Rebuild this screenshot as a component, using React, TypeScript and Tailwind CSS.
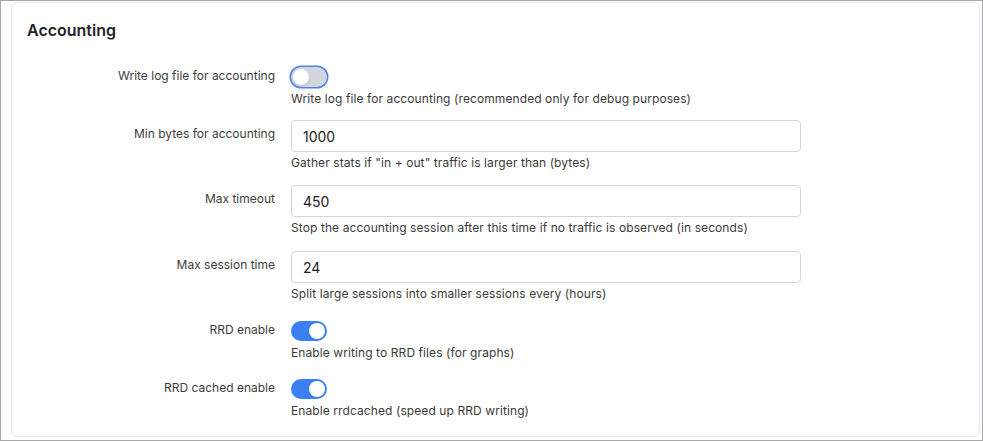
import * as React from 'react'

type Row =
  | { kind: 'toggle'; label: string; help: string; on: boolean; top: string }
  | { kind: 'input'; label: string; help: string; value: string; top: string }

// row spacing in the source form isn't perfectly even, so each row keeps its own top margin
const rows: Row[] = [
  { kind: 'toggle', label: 'Write log file for accounting', help: 'Write log file for accounting (recommended only for debug purposes)', on: false, top: 'mt-0' },
  { kind: 'input', label: 'Min bytes for accounting', help: 'Gather stats if "in + out" traffic is larger than (bytes)', value: '1000', top: 'mt-[11px]' },
  { kind: 'input', label: 'Max timeout', help: 'Stop the accounting session after this time if no traffic is observed (in seconds)', value: '450', top: 'mt-[12px]' },
  { kind: 'input', label: 'Max session time', help: 'Split large sessions into smaller sessions every (hours)', value: '24', top: 'mt-[13px]' },
  { kind: 'toggle', label: 'RRD enable', help: 'Enable writing to RRD files (for graphs)', on: true, top: 'mt-[15px]' },
  { kind: 'toggle', label: 'RRD cached enable', help: 'Enable rrdcached (speed up RRD writing)', on: true, top: 'mt-[14px]' },
]

function Toggle({ on }: { on: boolean }) {
  return (
    <div className="h-[24px] flex items-center">
      <div
        className={
          on
            ? 'relative w-[36px] h-[20px] rounded-full bg-[#3b7ff0]'
            : 'relative w-[36px] h-[20px] rounded-full bg-[#d3d6dc] ring-[1.5px] ring-[#4a86f0]'
        }
      >
        <span
          className={
            on
              ? 'absolute top-[2px] right-[2px] w-[16px] h-[16px] rounded-full bg-white'
              : 'absolute top-[2px] left-[2px] w-[16px] h-[16px] rounded-full bg-white shadow-sm'
          }
        />
      </div>
    </div>
  )
}

export default function App() {
  return (
    <div
      className="w-[983px] h-[441px] border border-[#a8a8a8] bg-white pl-[10px] pr-[2px] pt-[1px] pb-[3px]"
      style={{ fontFamily: 'Inter, "Noto Sans", sans-serif' }}
    >
      <div className="h-full rounded-md border border-[#e4e7eb] bg-white pt-[16px]">
        <h2 className="pl-[15px] text-[16px] leading-[22px] font-semibold text-[#1f2328]">Accounting</h2>
        <div className="mt-[24px] flex flex-col">
          {rows.map((r) => (
            <div key={r.label} className={`flex ${r.top}`}>
              <div
                className={
                  r.kind === 'input'
                    ? 'w-[263px] text-right text-[12px] leading-[20px] pt-[4px] text-[#3d3d3d]'
                    : 'w-[263px] text-right text-[12px] leading-[20px] pt-[1px] text-[#3d3d3d]'
                }
              >
                {r.label}
              </div>
              <div className="ml-[16px] flex flex-col">
                {r.kind === 'toggle' ? (
                  <Toggle on={r.on} />
                ) : (
                  <div className="w-[510px] h-[32px] rounded-[4px] border border-[#d2d6dc] px-[11px] flex items-center text-[14px] text-[#222]">
                    {r.value}
                  </div>
                )}
                <div
                  className={
                    r.kind === 'input'
                      ? 'mt-[1px] text-[12px] tracking-[0.09px] leading-[20px] text-[#3a3a3a]'
                      : 'text-[12px] tracking-[0.09px] leading-[20px] text-[#3a3a3a]'
                  }
                >
                  {r.help}
                </div>
              </div>
            </div>
          ))}
        </div>
      </div>
    </div>
  )
}
